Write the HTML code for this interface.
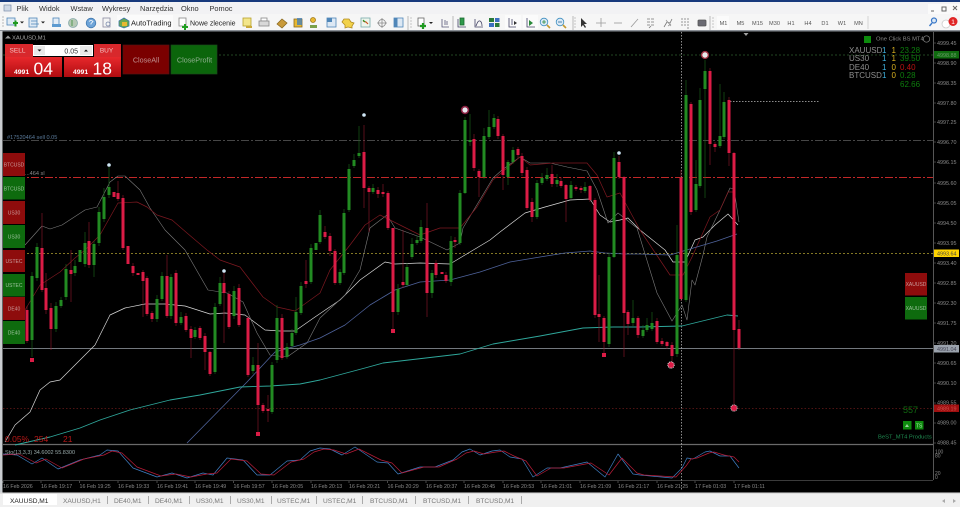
<!DOCTYPE html>
<html><head><meta charset="utf-8"><title>XAUUSD,M1</title>
<style>
html,body{margin:0;padding:0;background:#f0f0f0;width:960px;height:507px;overflow:hidden}
svg{display:block;filter:blur(.3px)}
text{font-family:"Liberation Sans",sans-serif}
</style></head><body>
<svg width="960" height="507" viewBox="0 0 960 507" xmlns="http://www.w3.org/2000/svg">
<defs>
<linearGradient id="rg" x1="0" y1="0" x2="0" y2="1"><stop offset="0" stop-color="#e8282c"/><stop offset="1" stop-color="#b00c10"/></linearGradient>
</defs>
<rect width="960" height="507" fill="#f0f0f0"/>
<rect width="960" height="2" fill="#17397c"/>
<rect y="2" width="960" height="12" fill="#f2f2f4"/>
<rect y="14" width="960" height="17" fill="#f6f6f6"/>
<rect x="928" y="4" width="32" height="10" fill="#fafafa"/>
<!-- menu -->
<g font-size="7.400" fill="#333">
<text x="16.500" y="11">Plik</text><text x="39" y="11">Widok</text><text x="70.500" y="11">Wstaw</text><text x="102" y="11">Wykresy</text><text x="140" y="11">Narzędzia</text><text x="181" y="11">Okno</text><text x="209.500" y="11">Pomoc</text>
</g>
<g fill="none" stroke="#666" stroke-width="1"><path d="M931 11h3"/><path d="M942 7h4v4h-4z"/><path d="M953 6l4 4M957 6l-4 4"/></g>
<rect x="4" y="5" width="7" height="6" fill="#cfd8e6" stroke="#7b8ea8" stroke-width=".7"/>
<!-- toolbar icons -->
<g stroke-width=".8">
<rect x="7" y="18" width="8" height="7" fill="#dfeaf4" stroke="#4f86b8"/><path d="M13 23h5M15.500 20.500v6" stroke="#1f9a20" stroke-width="2"/><path d="M20 21.500l2 2 2-2z" fill="#222" stroke="none"/>
<rect x="29" y="18" width="8" height="9" fill="#dfeaf4" stroke="#4f86b8"/><path d="M31 21h6M31 24h8" stroke="#4f86b8"/><path d="M41 21.500l2 2 2-2z" fill="#222" stroke="none"/>
<rect x="53" y="18" width="6" height="7" fill="#e4edf7" stroke="#4f86b8"/><rect x="52" y="24" width="9" height="3" fill="#5d9ad0" stroke="none"/>
<circle cx="73" cy="23" r="4.500" fill="#b5c9b5" stroke="#8aa"/><path d="M72 20v6" stroke="#3b8d3b"/>
<circle cx="91" cy="23" r="4.800" fill="#6ea4d8" stroke="#4179b0"/><path d="M89 21.500q2-2 4 0l-2 2v1" stroke="#fff" fill="none"/>
<rect x="103" y="18" width="7" height="9" fill="#f4f4f4" stroke="#8a8aa0"/><circle cx="108" cy="24" r="2" fill="none" stroke="#7788aa"/>
<rect x="117" y="15" width="56" height="15" fill="#fbfbfb" stroke="none"/>
<path d="M119 21l5-3 5 3v5l-5 2-5-2z" fill="#6aa84f" stroke="#3e78a8"/><rect x="122" y="22" width="5" height="4" fill="#e8b830" stroke="none"/>
<rect x="179" y="18" width="7" height="8" fill="#fff" stroke="#888"/><path d="M182 27h6M185 24v6" stroke="#22a022" stroke-width="2"/>
<rect x="243" y="18" width="8" height="8" fill="#f3e68a" stroke="#b7a02c"/><path d="M246 26h6v2h-6z" fill="#caa93a" stroke="none"/>
<rect x="261" y="18" width="6" height="3" fill="#fff" stroke="#888"/><rect x="259" y="21" width="10" height="5" fill="#d8d8d8" stroke="#888"/>
<path d="M277 24l5-5 5 4-5 5z" fill="#c99a3a" stroke="#8a6a20"/>
<rect x="294" y="19" width="8" height="8" fill="#e8b830" stroke="#8a6a20"/><rect x="297" y="18" width="5" height="7" fill="#3f7fbf" stroke="none" opacity=".75"/>
<circle cx="313" cy="20" r="2.500" fill="#e8b830" stroke="#a07818"/><path d="M310 25h7v3h-7z" fill="#7aa04a" stroke="none"/>
<rect x="327" y="18" width="9" height="9" fill="#dce8f4" stroke="#4f86b8"/><rect x="327" y="18" width="5" height="4" fill="#4f86b8" stroke="none"/>
<path d="M344 19h5l2 3 3 1-2 3 0 2-4-1-3 1 0-3-3-3z" fill="#f2d24a" stroke="#b08a20"/>
<rect x="361" y="18" width="9" height="9" fill="#eef5ec" stroke="#7aa"/><path d="M363 21l3 1 2 2" stroke="#cc5522" stroke-width="1.200" fill="none"/><path d="M363 20l2 2" stroke="#2a9a2a" stroke-width="1.200"/>
<circle cx="382" cy="23" r="3.500" fill="none" stroke="#888"/><path d="M382 18v10M377 23h10" stroke="#888"/>
<rect x="394" y="18" width="9" height="9" fill="#dce8f4" stroke="#4f86b8"/><rect x="394" y="18" width="3.500" height="9" fill="#4f86b8" stroke="none"/>
<path d="M408 16v14" stroke="#aaa"/><path d="M411 17v11" stroke="#bbb" stroke-dasharray="2 1"/>
<rect x="418" y="18" width="6" height="8" fill="#fff" stroke="#666"/><path d="M420 26h6M423 23v6" stroke="#1f9a20" stroke-width="2.200"/><path d="M429 22l2 2 2-2z" fill="#222" stroke="none"/>
<path d="M442 19v8h7M445 20v5M447 21v4" stroke="#557" fill="none"/>
<path d="M453 16v14" stroke="#aaa"/>
<path d="M458 19v8h8" stroke="#446" fill="none"/><rect x="460" y="18" width="4" height="7" fill="#2e9a4a" stroke="#1a6a30"/>
<path d="M475 19v8h8M476 26q2-6 4-5t2 5" stroke="#446" fill="none"/>
<rect x="489" y="18" width="5" height="4" fill="#2a7a3a" stroke="none"/><rect x="495" y="18" width="4.500" height="4" fill="#3b6fc0" stroke="none"/><rect x="489" y="23" width="5" height="4" fill="#3b6fc0" stroke="none"/><rect x="495" y="23" width="4.500" height="4" fill="#2a7a3a" stroke="none"/>
<rect x="505" y="15" width="16" height="14" fill="#fbfbfb" stroke="none"/>
<path d="M509 18v9h7M512 19v6M509 27h3" stroke="#446" fill="none"/><path d="M514 21l3 2-3 2z" fill="#333" stroke="none"/>
<rect x="523" y="15" width="15" height="14" fill="#fbfbfb" stroke="none"/>
<path d="M527 18v9h8" stroke="#446" fill="none"/><path d="M529 20l4 3-4 3z" fill="#2a8a3a" stroke="none"/>
<circle cx="544" cy="22" r="3.800" fill="#dceaf6" stroke="#3f8fc0"/><path d="M547 25l3 3" stroke="#c49a30" stroke-width="1.600"/><path d="M542 22h4M544 20v4" stroke="#2a8a3a"/>
<circle cx="560" cy="22" r="3.800" fill="#dceaf6" stroke="#3f8fc0"/><path d="M563 25l3 3" stroke="#c49a30" stroke-width="1.600"/><path d="M558 22h4" stroke="#2a6a9a"/>
<path d="M573 16v14" stroke="#aaa"/><path d="M575 17v11" stroke="#bbb" stroke-dasharray="2 1"/>
<path d="M581 18l0 9 2-2 2 3 1-1-2-3 3 0z" fill="#333" stroke="none"/>
<path d="M601 18v9M596 23h10" stroke="#999"/><path d="M614 23h8" stroke="#999"/><path d="M631 27l7-8" stroke="#999"/>
<path d="M647 19h8M647 22h8M647 25h8M649 28l2-2" stroke="#777" stroke-dasharray="3 1"/>
<path d="M664 27l3-5 3 1 2-4" stroke="#777" fill="none"/><path d="M666 20l5 6M668 26l3-2" stroke="#999"/>
<path d="M681 19h8M681 22h8M681 25h8M687 28h3" stroke="#777" stroke-dasharray="2 1"/>
<rect x="698" y="20" width="8" height="6" rx="1" fill="#6a6a72" stroke="#555"/>
<path d="M710 16v14" stroke="#aaa"/><path d="M713 17v11" stroke="#bbb" stroke-dasharray="2 1"/>
<rect x="717" y="16" width="12" height="13" fill="#fbfbfb" stroke="none"/>
<path d="M868 16V29" stroke="#ccc"/>
<circle cx="934" cy="20.500" r="2.500" fill="#dbe8f4" stroke="#3a78c8" stroke-width="1.200"/><path d="M932 23l-2.500 3" stroke="#3a78c8" stroke-width="1.400"/>
<circle cx="946" cy="24" r="4" fill="#fff" stroke="#ccc"/>
<circle cx="953" cy="21.500" r="4.500" fill="#e02525" stroke="none"/>
</g>
<path d="M3 16v12" stroke="#bbb" stroke-dasharray="2 1"/>
<text x="131" y="25.500" font-size="7.500" fill="#222">AutoTrading</text>
<text x="190" y="25.500" font-size="7" fill="#222">Nowe zlecenie</text>
<text x="953" y="24" font-size="6.500" text-anchor="middle" fill="#fff">1</text>
<g font-size="5.600" fill="#555" text-anchor="middle">
<text x="723.500" y="25">M1</text><text x="740.500" y="25">M5</text><text x="757.500" y="25">M15</text><text x="774.500" y="25">M30</text><text x="791" y="25">H1</text><text x="808" y="25">H4</text><text x="825" y="25">D1</text><text x="842" y="25">W1</text><text x="858.500" y="25">MN</text>
</g>
<!-- chart window -->
<rect x="0" y="31" width="960" height="462" fill="#000"/>
<rect x="0" y="30" width="960" height="1.500" fill="#8a8f96"/>
<rect x="0" y="31" width="2.500" height="462" fill="#c9ccd0"/>
<path d="M933.500 32V480" stroke="#6d6d6d" stroke-width=".8"/>
<path d="M3 444.500H933" stroke="#6a6a6a" stroke-width="1.200"/>
<path d="M3 480.500H933" stroke="#777" stroke-width=".6"/>
<path d="M3 481v2M41 481v2M79.500 481v2M118 481v2M157 481v2M195 481v2M233.500 481v2M272 481v2M311 481v2M349 481v2M387.500 481v2M426 481v2M464 481v2M503 481v2M541 481v2M580 481v2M618 481v2M657 481v2M695 481v2M734 481v2" stroke="#777" stroke-width=".6"/>
<path d="M934 43h2M934 63h2M934 83h2M934 103h2M934 122h2M934 142h2M934 162h2M934 183h2M934 203h2M934 223h2M934 243h2M934 263h2M934 283h2M934 303h2M934 323h2M934 343h2M934 363h2M934 383h2M934 403h2M934 423h2M934 443h2" stroke="#777" stroke-width=".6"/>
<rect x="0" y="492.500" width="960" height="1.500" fill="#dedede"/>
<!-- horizontal lines -->
<g fill="none">
<path d="M3 55H933" stroke="#2e5e2e" stroke-width=".8" stroke-dasharray="2 2"/>
<path d="M3 140.500H933" stroke="#5e5e5e" stroke-width=".7" stroke-dasharray="8 2 2 2"/>
<path d="M3 177.500H933" stroke="#c22828" stroke-width=".9" stroke-dasharray="8 2 2 2"/>
<path d="M3 253.500H933" stroke="#b0a030" stroke-width=".8" stroke-dasharray="2 2"/>
<path d="M3 348.500H933" stroke="#9aa0a8" stroke-width=".8"/>
<path d="M3 408.500H933" stroke="#6a1a1a" stroke-width=".7" stroke-dasharray="1.500 2"/>
<path d="M681.500 32V490" stroke="#c8c8c8" stroke-width=".7" stroke-dasharray="1.500 1.500"/>
<path d="M730 101.500H820" stroke="#bbb" stroke-width=".7" stroke-dasharray="1.500 1.500"/>
</g>
<!-- moving averages -->
<g fill="none" stroke-linejoin="round">
<path d="M5 442L15 425L30 412L40 390L50 382L60 380L75 365L95 345L110 315L125 308L145 304L165 304L185 306L210 314L225 313L245 315L265 330L280 331L295 331L315 317L340 300L360 280L385 262L395 264L420 263L450 264L465 255L490 240L500 232L525 213L545 207L570 200L590 199L600 215L610 222L620 220L628 218L640 230L650 238L665 250L673 262L685 262L695 240L703 237L715 225L728 214L738 225" stroke="#d8d8d8" stroke-width=".7"/>
<path d="M25 245L42 226L50 229L62 225L85 210L97 207L110 182L118 176L125 176L140 190L150 208L165 230L185 250L208 290L227 293L243 302L257 333L270 355L287 357L307 343L320 318L345 295L360 270L370 228L387 215L395 228L420 237L447 250L460 243L463 228L493 178L502 170L520 157L530 163L550 163L567 167L587 171L597 190L608 223L618 213L637 228L657 293L672 321L682 305L687 320L692 280L695 285L703 255L707 237L720 210L730 188L734 189L739 222" stroke="#7c7c7c" stroke-width=".6"/>
<path d="M25 310L40 285L60 272L75 258L85 250L100 235L118 203L137 202L147 207L157 215L172 220L187 233L207 250L220 260L240 267L263 297L277 307L295 311L320 293L330 270L350 245L365 225L380 215L400 225L420 235L440 228L460 228L477 207L493 180L507 168L520 157L530 165L553 163L587 163L597 175L607 197L620 193L640 230L660 260L670 275L683 275L692 257L710 217L720 210L728 192L735 192" stroke="#7e1820" stroke-width=".7"/>
<path d="M187 443L247 382L275 352L300 345L320 338L345 325L370 305L395 290L420 282L450 280L480 272L510 262L540 257L565 253L590 251L605 253L625 254L640 254L670 255L690 249L717 241L737 234" stroke="#4f639c" stroke-width=".8"/>
<path d="M15 445L50 437L80 428L100 420L130 410L170 400L200 395L240 387L270 386L300 384L320 380L365 368L383 363L460 354L493 344L540 336L583 328L613 327L640 327L682 326L727 315L738 316" stroke="#2fa89c" stroke-width=".9"/>
</g>
<!-- wicks -->
<path fill="none" stroke="#1a6a1a" stroke-width=".6" d="M32 272V357M37 243V281M56 302V332M61 297V308M66 264V300M75 260V276M85 232V267M94 241V277M99 207V246M104 188V222M109 167V198M157 295V322M162 272V301M171 274V319M181 312V325M195 327V339M215 303V374M220 277V306M234 286V319M253 357V374M272 362V414M277 305V363M287 343V359M292 329V348M296 297V335M301 282V315M311 244V284M320 210V244M340 269V285M344 209V275M349 164V212M354 154V168M359 126V158M373 184V194M398 284V315M407 263V287M412 238V259M417 236V245M421 220V243M432 270V298M451 236V286M460 190V245M465 117V194M470 114V146M484 128V179M489 110V139M494 114V129M508 160V185M513 147V164M537 180V219M542 173V185M547 168V181M557 174V187M571 181V199M585 182V193M609 253V347M614 152V258M633 300V326M643 325V338M647 318V332M652 312V331M677 225V357M686 80V302M696 160V212M700 88V188M705 60V198M720 84V148M724 92V139"/>
<path fill="none" stroke="#90182c" stroke-width=".6" d="M27 306V343M42 213V292M46 273V314M51 303V350M71 250V302M89 222V268M118 181V201M123 195V250M133 263V276M143 270V317M147 276V316M152 311V322M167 255V318M176 270V326M186 313V332M191 326V358M200 326V340M205 333V370M210 351V376M224 272V343M229 291V329M239 284V327M248 316V377M258 343V433M263 403V413M268 395V422M282 314V360M306 260V288M325 226V239M330 233V256M335 249V285M364 125V208M369 186V232M378 187V198M383 184V197M388 191V230M393 229V330M403 230V288M427 203V317M436 260V278M446 272V283M455 237V248M474 134V171M479 169V197M498 116V139M503 134V190M518 147V158M522 153V176M527 167V210M532 198V222M552 165V187M561 177V188M566 184V222M576 185V191M581 186V193M590 185V202M595 198V318M599 275V342M604 316V355M619 156V179M624 176V357M628 310V335M638 316V338M657 318V344M662 338V346M667 341V349M672 342V362M681 170V301M691 102V215M710 68V165M715 142V152M729 97V166M734 152V407M739 320V350"/>
<!-- bodies -->
<path fill="none" stroke="#228b22" stroke-width="3" d="M32 276V340M37 247V278M56 306V329M61 300V306M66 269V297M75 266V273M80 250V262M85 243V264M94 244V265M99 212V243M104 197V219M109 187V195M157 299V319M162 276V299M171 277V316M181 317V323M195 330V337M215 307V372M220 283V304M234 291V316M253 365V371M272 365V412M277 318V360M287 347V357M292 333V346M296 312V333M301 286V313M311 248V282M316 243V250M320 215V242M340 272V283M344 213V273M349 169V210M354 160V166M359 153V156M373 188V192M398 289V312M407 267V285M412 244V257M417 240V243M421 227V241M432 273V293M451 241V282M460 193V243M465 120V193M470 140V142M484 136V177M489 127V137M494 118V127M508 162V177M513 150V162M537 183V217M542 178V183M547 175V179M557 180V184M571 185V198M585 187V191M609 257V344M614 158V257M633 318V323M643 330V336M647 325V330M652 323V329M677 255V354M686 95V300M696 184V210M700 100V186M705 71V89M720 136V146M724 102V137"/>
<path fill="none" stroke="#dc1c46" stroke-width="3" d="M27 310V341M42 248V290M46 288V310M51 308V329M71 270V274M89 241V265M114 192V197M118 193V199M123 198V248M128 246V264M133 266V273M138 273V275M143 272V281M147 278V314M152 313V319M167 276V316M176 273V323M186 316V330M191 329V338M200 328V338M205 336V352M210 352V374M224 283V293M229 294V327M239 288V325M248 318V375M258 365V405M263 405V411M268 409V411M282 318V358M306 281V284M325 232V237M330 236V251M335 251V283M364 152V188M369 188V192M378 190V194M383 192V194M388 193V228M393 228V312M403 282V285M427 228V293M436 263V275M442 272V274M446 275V281M455 240V242M474 139V168M479 171V177M498 119V136M503 136V175M518 149V155M522 156V173M527 170V208M532 202V217M552 174V184M561 181V186M566 185V199M576 187V189M581 188V190M590 186V200M595 200V315M599 314V317M604 318V342M619 162V177M624 177V313M628 312V324M638 318V335M657 321V342M662 341V344M667 342V346M672 345V356M681 178V299M691 104V212M710 71V144M715 144V147M729 100V153M734 153V330M739 329V348"/>
<!-- markers -->
<circle cx="109" cy="165" r="1.800" fill="#cfe6f5"/><circle cx="224" cy="271" r="1.800" fill="#cfe6f5"/><circle cx="364" cy="115" r="1.800" fill="#cfe6f5"/><circle cx="619" cy="153" r="1.800" fill="#cfe6f5"/>
<circle cx="465" cy="110" r="3.400" fill="#e8e8f0" stroke="#8a2040" stroke-width="1.600"/>
<circle cx="705" cy="55" r="3.400" fill="#e8e8e8" stroke="#a03040" stroke-width="1.400"/>
<rect x="30" y="358" width="4" height="4" fill="#dc1c46"/><rect x="256" y="432" width="4" height="4" fill="#dc1c46"/><rect x="391" y="329" width="4" height="4" fill="#dc1c46"/><rect x="602" y="353" width="4" height="4" fill="#dc1c46"/>
<circle cx="671" cy="365" r="3.200" fill="#dc1c46" stroke="#ddd" stroke-width="1" stroke-dasharray="1 .8"/>
<circle cx="734" cy="408" r="3.200" fill="#dc1c46" stroke="#bbb" stroke-width="1" stroke-dasharray="1 .8"/>
<!-- stochastic -->
<g fill="none" stroke-linejoin="round">
<path stroke="#3f7fc4" stroke-width=".7" d="M3 454L17 455L32 464L42 458L58 469L80 460L100 455L107 450L118 451L133 468L157 477L172 473L187 478L203 473L213 475L227 458L243 460L257 475L270 475L287 461L300 460L310 451L320 448L330 449L342 455L355 447L377 462L388 463L398 474L420 467L435 467L453 460L462 452L470 449L480 455L492 451L500 450L510 457L522 459L533 477L547 468L560 468L587 462L605 477L618 454L633 474L640 475L672 478L682 468L687 458L693 459L705 452L710 451L720 456L730 456L739 468"/>
<path stroke="#b81c38" stroke-width=".7" d="M3 455L19 454L36 463L46 459L62 468L84 459L104 455L112 451L122 453L137 467L161 476L176 474L191 477L207 474L217 473L231 459L247 461L261 474L274 475L291 462L304 459L314 452L324 449L334 450L346 454L359 449L381 460L392 463L402 473L424 467L439 467L457 459L466 453L474 451L484 454L496 452L504 451L514 456L526 461L537 476L551 468L564 468L591 463L609 475L622 458L637 473L644 475L676 477L686 466L691 459L697 458L709 453L714 452L724 455L734 457L739 462"/>
</g>
<!-- chart texts -->
<path d="M5 38.500l3-3 3 3z" fill="#999"/>
<text x="12" y="39.500" font-size="5.800" fill="#a8a8a8">XAUUSD,M1</text>
<text x="7" y="139" font-size="5.600" fill="#5a7a9a">#17520464 sell 0.05</text>
<text x="25" y="175" font-size="5.600" fill="#8a8a8a">...464 sl</text>
<text x="5" y="454" font-size="5.500" fill="#9aa">Sto(13,3,3) 34.6002 55.8300</text>
<g font-size="8.500" fill="#b81818"><text x="5" y="442">0.05%</text><text x="34" y="442">254</text><text x="63" y="442">21</text></g>
<!-- time axis -->
<g fill="#888" stroke="none" font-size="5.300">
<text x="3" y="488">16 Feb 2026</text><text x="41" y="488">16 Feb 19:17</text><text x="79.500" y="488">16 Feb 19:25</text><text x="118" y="488">16 Feb 19:33</text><text x="157" y="488">16 Feb 19:41</text><text x="195" y="488">16 Feb 19:49</text><text x="233.500" y="488">16 Feb 19:57</text><text x="272" y="488">16 Feb 20:05</text><text x="311" y="488">16 Feb 20:13</text><text x="349" y="488">16 Feb 20:21</text><text x="387.500" y="488">16 Feb 20:29</text><text x="426" y="488">16 Feb 20:37</text><text x="464" y="488">16 Feb 20:45</text><text x="503" y="488">16 Feb 20:53</text><text x="541" y="488">16 Feb 21:01</text><text x="580" y="488">16 Feb 21:09</text><text x="618" y="488">16 Feb 21:17</text><text x="657" y="488">16 Feb 21:25</text><text x="695" y="488">17 Feb 01:03</text><text x="734" y="488">17 Feb 01:11</text>
</g>
<!-- price axis -->
<g fill="#8a8a8a" font-size="5.400">
<text x="937" y="45">4999.45</text><text x="937" y="65">4998.90</text><text x="937" y="85">4998.35</text><text x="937" y="105">4997.80</text><text x="937" y="124">4997.25</text><text x="937" y="144">4996.70</text><text x="937" y="164">4996.15</text><text x="937" y="185">4995.60</text><text x="937" y="205">4995.05</text><text x="937" y="225">4994.50</text><text x="937" y="245">4993.95</text><text x="937" y="265">4993.40</text><text x="937" y="285">4992.85</text><text x="937" y="305">4992.30</text><text x="937" y="325">4991.75</text><text x="937" y="345">4991.20</text><text x="937" y="365">4990.65</text><text x="937" y="385">4990.10</text><text x="937" y="404.500">4989.55</text><text x="937" y="424.500">4989.00</text><text x="937" y="444.500">4988.45</text>
<text x="935" y="453.500" font-size="5">100</text><text x="935" y="457.500" font-size="5">80</text><text x="935" y="475" font-size="5">20</text><text x="935" y="479" font-size="5">0</text>
</g>
<rect x="934" y="51" width="25" height="7.500" fill="#0f6b0f"/><text x="937" y="57" font-size="5.400" fill="#6a9a6a">4998.88</text>
<rect x="934" y="249.500" width="25" height="7.500" fill="#ffd400"/><text x="937" y="255.500" font-size="5.400" fill="#444">4993.64</text>
<rect x="934" y="345" width="25" height="7.500" fill="#9aa2ac"/><text x="937" y="351" font-size="5.400" fill="#445">4991.04</text>
<rect x="934" y="404.500" width="25" height="7.500" fill="#a01010"/><text x="937" y="410.500" font-size="5.400" fill="#d05050">4989.19</text>
<path d="M743.500 33h5l-2.500 3z" fill="#a0a0a0"/>
<!-- top right panel -->
<rect x="864" y="36" width="7" height="7" fill="#0c8a0c"/>
<text x="876" y="40.500" font-size="5.800" fill="#8a8a8a">One Click BS MT4</text>
<circle cx="926.500" cy="39" r="3.200" fill="none" stroke="#888" stroke-width=".7"/>
<g font-size="8">
<g fill="#8f8f8f"><text x="849" y="53">XAUUSD</text><text x="849" y="61">US30</text><text x="849" y="70">DE40</text><text x="849" y="78">BTCUSD</text></g>
<g fill="#3fb2e0"><text x="882" y="53">1</text><text x="882" y="61">1</text><text x="882" y="70">1</text><text x="882" y="78">1</text></g>
<g fill="#d8b020"><text x="891.500" y="53">1</text><text x="891.500" y="61">1</text><text x="891.500" y="70">0</text><text x="891.500" y="78">0</text></g>
<g fill="#0d7d0d"><text x="900" y="53">23.28</text><text x="900" y="61">39.50</text><text x="900" y="78">0.28</text><text x="900" y="87">62.66</text></g>
<text x="900" y="70" fill="#b81212">0.40</text>
</g>
<!-- trade panel -->
<rect x="5" y="44" width="28" height="13.500" fill="#d8282c"/>
<rect x="94" y="44" width="27" height="13.500" fill="#d8282c"/>
<rect x="5" y="57" width="57" height="20" fill="url(#rg)"/>
<rect x="64" y="57" width="57" height="20" fill="url(#rg)"/>
<rect x="33" y="45" width="60" height="11" fill="#fff"/>
<rect x="34" y="46" width="11" height="9" fill="#e8e8e8"/><rect x="80" y="46" width="12" height="9" fill="#e8e8e8"/>
<path d="M37.500 49.500h4l-2 2z" fill="#111"/><path d="M84 51.500h4l-2-2z" fill="#111"/>
<text x="78" y="53.500" font-size="7" text-anchor="end" fill="#333">0.05</text>
<text x="17.500" y="52.500" font-size="6.500" text-anchor="middle" fill="#f3c0c0">SELL</text>
<text x="106.500" y="52.500" font-size="6.500" text-anchor="middle" fill="#f3c0c0">BUY</text>
<text x="14" y="74" font-size="6.800" font-weight="bold" fill="#fff">4991</text>
<text x="73" y="74" font-size="6.800" font-weight="bold" fill="#fff">4991</text>
<text x="33.500" y="74.500" font-size="17.500" fill="#fff">04</text>
<text x="92.500" y="74.500" font-size="17.500" fill="#fff">18</text>
<rect x="123" y="45" width="46" height="29" fill="#7a0000" stroke="#5a1010" stroke-width=".7"/>
<text x="146" y="62.500" font-size="7.200" text-anchor="middle" fill="#c09090">CloseAll</text>
<rect x="171" y="45" width="46" height="29" fill="#0b650b" stroke="#1a4a1a" stroke-width=".7"/>
<text x="194.500" y="62.500" font-size="7.200" text-anchor="middle" fill="#90b090">CloseProfit</text>
<!-- side buttons -->
<g>
<rect x="3" y="153" width="22" height="23" fill="#8e0c0c"/><rect x="3" y="177" width="22" height="22.500" fill="#0e6b0e"/>
<rect x="3" y="201" width="22" height="23" fill="#8e0c0c"/><rect x="3" y="225" width="22" height="23" fill="#0e6b0e"/>
<rect x="3" y="250" width="22" height="22" fill="#8e0c0c"/><rect x="3" y="274" width="22" height="22.500" fill="#0e6b0e"/>
<rect x="3" y="297" width="22" height="23" fill="#8e0c0c"/><rect x="3" y="321" width="22" height="23" fill="#0e6b0e"/>
<rect x="905" y="273" width="22" height="22.500" fill="#8e0c0c"/><rect x="905" y="297" width="22" height="22.500" fill="#0e6b0e"/>
</g>
<g font-size="5" text-anchor="middle">
<g fill="#c89a9a"><text x="14" y="166.500">BTCUSD</text><text x="14" y="214.500">US30</text><text x="14" y="263">USTEC</text><text x="14" y="310.500">DE40</text><text x="916" y="286">XAUUSD</text></g>
<g fill="#9ac09a"><text x="14" y="190.500">BTCUSD</text><text x="14" y="238.500">US30</text><text x="14" y="287">USTEC</text><text x="14" y="334.500">DE40</text><text x="916" y="310">XAUUSD</text></g>
</g>
<!-- bottom right -->
<text x="903" y="413" font-size="9" fill="#116a11">557</text>
<rect x="903" y="421" width="8.500" height="8.500" fill="#0e8a0e"/><rect x="915" y="421" width="8.500" height="8.500" fill="#0e8a0e"/>
<path d="M905 427l2-3 2 3z" fill="#9fd09f"/><text x="919.200" y="427.500" font-size="5" text-anchor="middle" fill="#b0e0b0">TS</text>
<text x="878" y="438.500" font-size="5.800" fill="#1f8a50">BeST_MT4 Products</text>
<!-- tabs -->
<rect x="3" y="494" width="54" height="11" fill="#fff"/>
<g font-size="6.600" fill="#777">
<text x="10" y="503" fill="#222">XAUUSD,M1</text><text x="63" y="503">XAUUSD,H1</text><text x="114" y="503">DE40,M1</text><text x="155" y="503">DE40,M1</text><text x="196" y="503">US30,M1</text><text x="237" y="503">US30,M1</text><text x="277" y="503">USTEC,M1</text><text x="323" y="503">USTEC,M1</text><text x="370" y="503">BTCUSD,M1</text><text x="423" y="503">BTCUSD,M1</text><text x="476" y="503">BTCUSD,M1</text>
</g>
<path d="M107.500 496v8M148.500 496v8M189.500 496v8M230.500 496v8M271.500 496v8M316.500 496v8M362.500 496v8M415.500 496v8M468.500 496v8M521.500 496v8" stroke="#999" stroke-width=".8"/>
<path d="M945 499l-3 2 3 2zM953 499l3 2-3 2z" fill="#aaa"/>
</svg>
</body></html>
